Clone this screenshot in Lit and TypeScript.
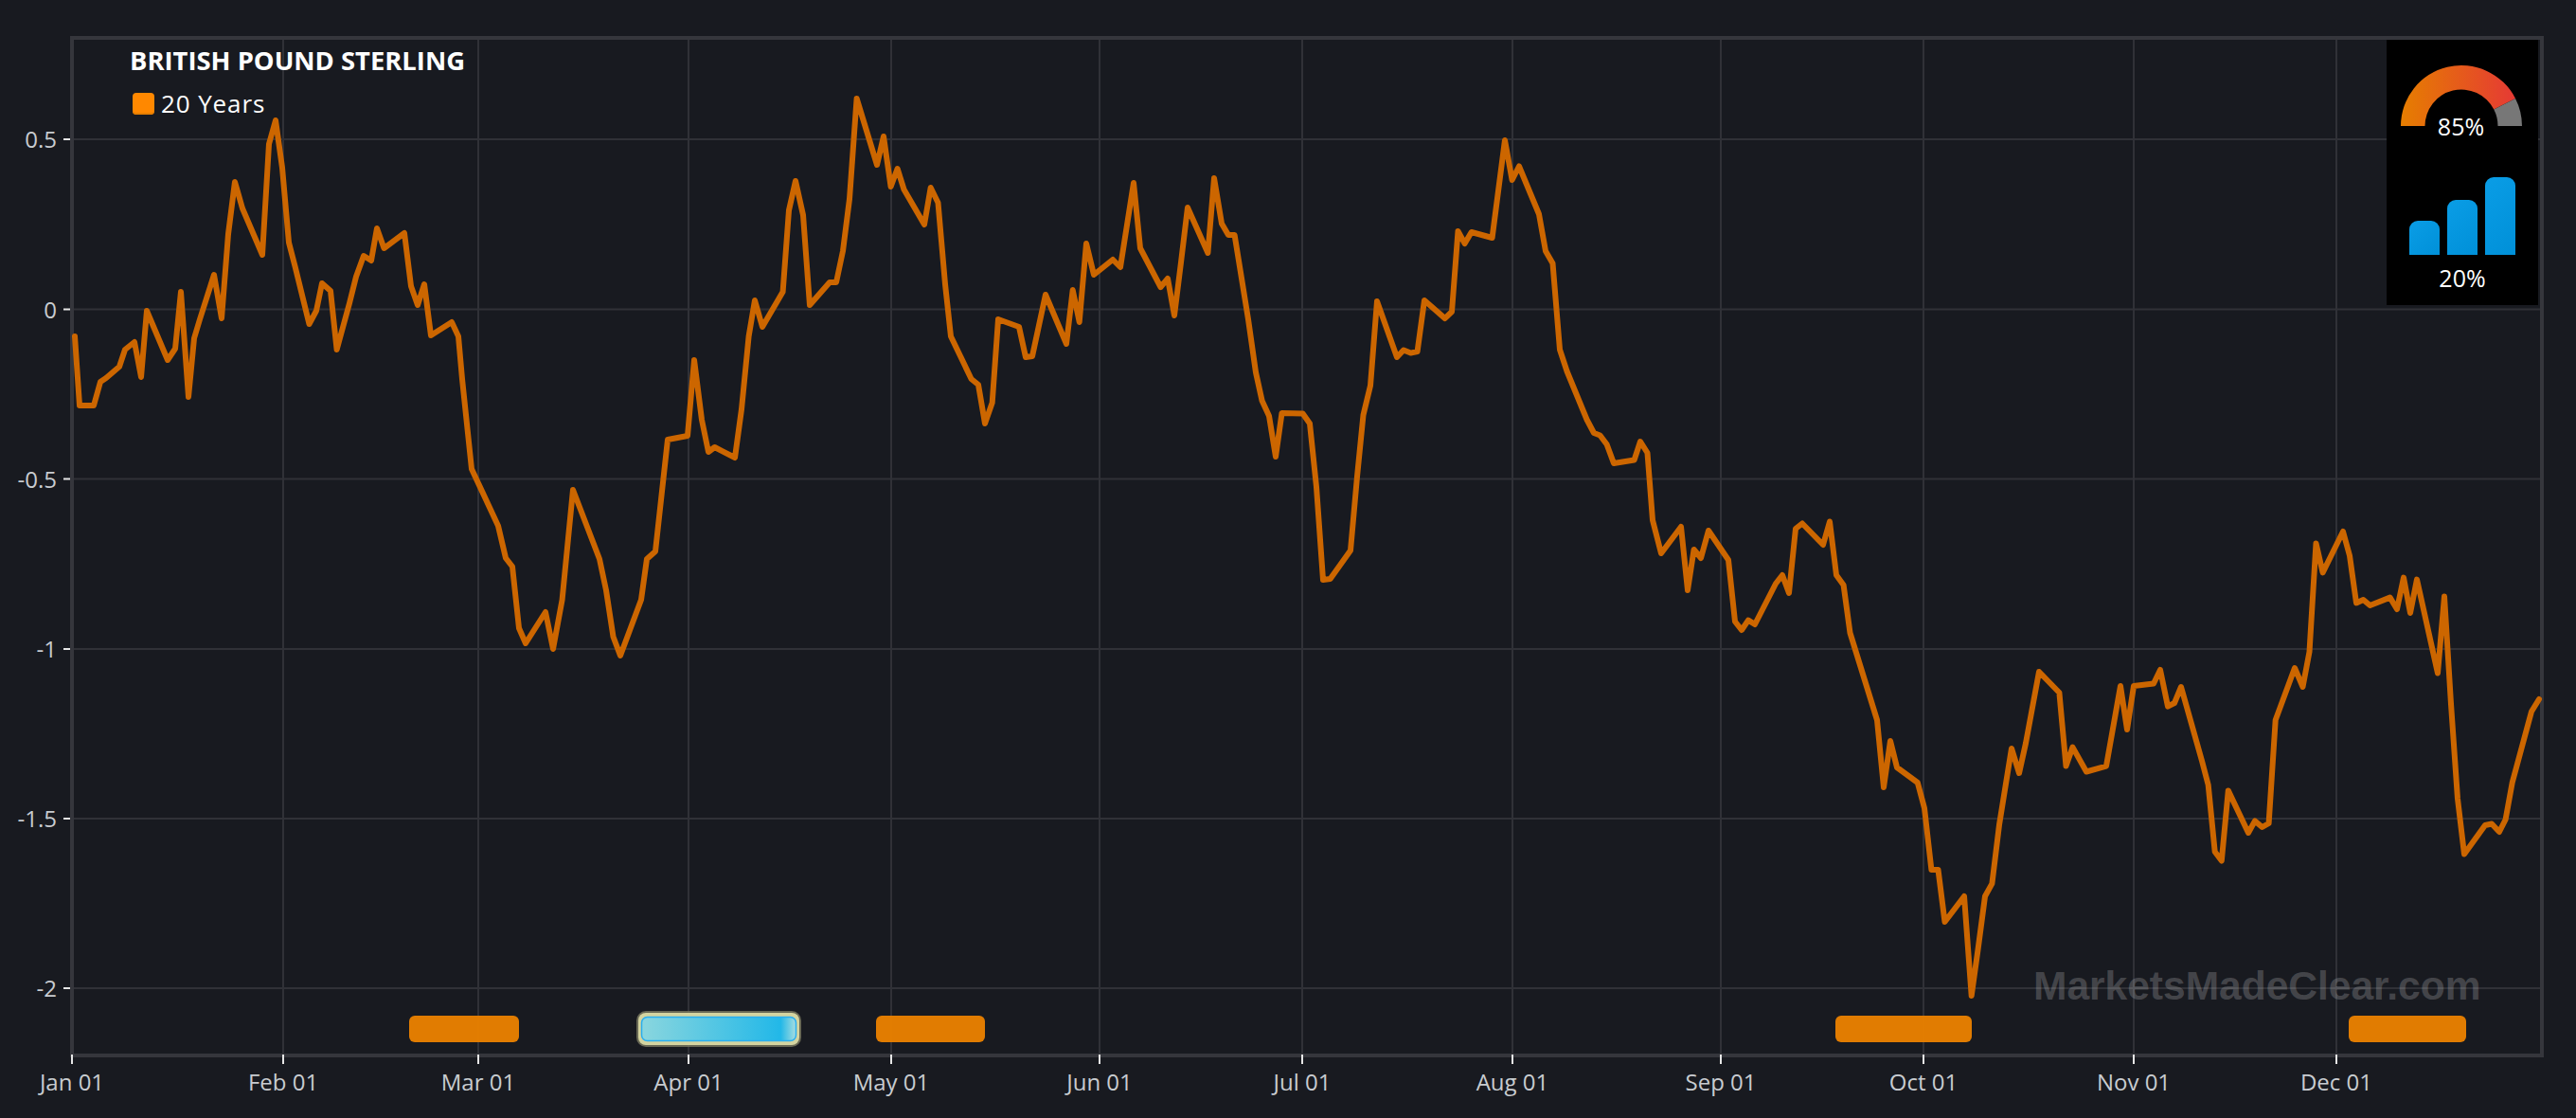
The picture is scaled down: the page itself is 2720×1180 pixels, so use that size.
import { LitElement, html, css, svg } from 'lit';
import { customElement } from 'lit/decorators.js';

const W = 2720;
const H = 1180;
const LEFT = 76;
const RIGHT = 2684;
const TOP = 40;
const BOTTOM = 1114;

const yTicks = [
  { label: '0.5', y: 147 },
  { label: '0', y: 326.5 },
  { label: '-0.5', y: 505.5 },
  { label: '-1', y: 685 },
  { label: '-1.5', y: 864 },
  { label: '-2', y: 1043 },
];

const xTicks = [
  { label: 'Jan 01', x: 76 },
  { label: 'Feb 01', x: 299 },
  { label: 'Mar 01', x: 505 },
  { label: 'Apr 01', x: 727 },
  { label: 'May 01', x: 941 },
  { label: 'Jun 01', x: 1161 },
  { label: 'Jul 01', x: 1375 },
  { label: 'Aug 01', x: 1597 },
  { label: 'Sep 01', x: 1817 },
  { label: 'Oct 01', x: 2031 },
  { label: 'Nov 01', x: 2253 },
  { label: 'Dec 01', x: 2467 },
];

// read off the reference, in page pixels
const series: number[][] = [
  [79, 355], [84, 428], [99, 428], [106, 403], [112, 399], [126, 387], [132, 369], [142, 361], [149, 398], [155, 328],
  [177, 380], [185, 368], [191, 308], [199, 419], [205, 357], [211, 337], [226, 290], [234, 336], [241, 247], [248, 192],
  [256, 220], [277, 269], [284, 152], [291, 127], [298, 177], [305, 256], [312, 283], [326.5, 342], [334, 328], [340, 299],
  [349, 307], [355.6, 369], [369, 320], [376, 292], [384, 270], [392, 275], [398, 241], [405.5, 262], [427, 246], [434, 302],
  [441, 322], [448, 300], [455, 354], [477, 340], [484, 355], [488, 400], [498, 495], [526, 555], [534, 589], [541, 598],
  [548, 663], [555, 679], [576, 646], [584, 685], [593.6, 633], [605, 517], [633, 590], [640, 623], [647.5, 672], [655, 692],
  [677, 633], [683, 590], [692, 582], [705, 464], [726, 460], [733, 380], [741, 443], [748, 477], [754.6, 472], [776, 483],
  [783, 432], [790.6, 355], [797, 317], [805, 345], [826.6, 308], [833, 222], [840, 191], [848, 227], [855, 322], [876, 298],
  [883, 298], [890, 265], [897, 210], [904.6, 104], [926, 174], [933, 144], [940.6, 197], [947.6, 178], [954.5, 200], [976, 237],
  [982.7, 198], [990.5, 214], [998, 300], [1004, 355], [1025.6, 400], [1033, 406], [1040, 447], [1047.7, 425], [1054, 337], [1076, 345],
  [1083, 377], [1090, 376], [1104, 311], [1126, 363], [1132.7, 306], [1139.7, 340], [1147, 257], [1155, 290], [1175, 274], [1183, 282],
  [1197, 193], [1204, 262], [1225.5, 303], [1233, 294], [1240, 333], [1247, 277], [1254, 219], [1275.4, 267], [1282, 188], [1290, 236],
  [1297, 248], [1303.6, 248], [1318, 337], [1326, 393], [1332.6, 423], [1340, 439], [1347, 482], [1353.5, 436], [1375.6, 436.5], [1383, 447],
  [1390, 514], [1397, 612], [1404.6, 611], [1426, 581], [1433, 503], [1439.5, 438], [1447, 407], [1454, 318], [1475, 377], [1482, 369.5],
  [1489.5, 372.6], [1496.6, 371], [1504, 317], [1525.6, 336], [1533, 329], [1539.5, 244], [1546.6, 257], [1553.7, 245], [1575.6, 251], [1589, 148],
  [1596.6, 190], [1604, 175.5], [1625, 226], [1632, 265], [1639.5, 278], [1647, 369], [1654.6, 392], [1675.6, 443], [1683, 457], [1689.5, 459.5],
  [1696.6, 469], [1704, 489], [1725.6, 485.5], [1732, 466], [1739.5, 478], [1745, 549], [1754, 584], [1775, 556], [1782, 623], [1788.6, 580],
  [1796, 589], [1804, 560], [1825, 591], [1832, 656], [1839, 665], [1846, 654.6], [1853, 659], [1875, 616], [1882, 607], [1889, 626],
  [1896, 558], [1903, 552.5], [1925, 575], [1932, 550.5], [1939, 607], [1946.6, 617.5], [1953.5, 668], [1982, 760], [1989, 831], [1996, 782],
  [2003, 810], [2024.8, 826], [2032, 853], [2039.4, 918], [2046.5, 918], [2053.5, 973], [2074, 946], [2081.7, 1051], [2088.7, 1001], [2096, 946],
  [2103.4, 932.6], [2111, 870.6], [2124, 790], [2132, 816], [2139, 784.5], [2153, 709], [2174.4, 731], [2181.5, 808.6], [2188.5, 788.6], [2203, 814.5],
  [2224, 808.6], [2239, 724], [2246, 770], [2253, 724], [2274, 721.5], [2281, 707], [2289, 745.6], [2296, 742], [2303, 725], [2325, 803],
  [2331.7, 828.6], [2338.7, 899], [2345.8, 908.5], [2352.8, 834.4], [2374, 879], [2381, 866.4], [2388.6, 873], [2395.6, 869], [2402.7, 760], [2423, 705],
  [2431.5, 725], [2438.5, 688], [2445.5, 573.4], [2452.6, 604.4], [2474, 561], [2481, 586.5], [2488, 636.4], [2495.4, 633], [2502.5, 639], [2523.6, 630.6],
  [2531, 643], [2538, 609.6], [2545, 647], [2552, 611.6], [2574, 710.5], [2581, 629.5], [2588, 743], [2595, 843], [2602, 901.6], [2624, 871],
  [2631, 869.5], [2639, 878], [2645.6, 865], [2652.7, 826], [2673, 751], [2681, 738],
];

const orangeBands = [
  [432, 548],
  [925, 1040],
  [1938, 2082],
  [2480, 2604],
];

// half ring with its centre at 0,0, from angle a to angle b (degrees from the left end)
function ring(a: number, b: number, r1: number, r2: number) {
  const p = (deg: number, r: number) => {
    const t = (deg * Math.PI) / 180;
    return `${(-r * Math.cos(t)).toFixed(2)} ${(-r * Math.sin(t)).toFixed(2)}`;
  };
  return `M${p(a, r1)} A${r1} ${r1} 0 0 1 ${p(b, r1)} L${p(b, r2)} A${r2} ${r2} 0 0 0 ${p(a, r2)} Z`;
}

@customElement('app-root')
export class AppRoot extends LitElement {
  static styles = css`
    :host {
      display: block;
      position: relative;
      width: 2720px;
      height: 1180px;
      overflow: hidden;
      background: #181a20;
      font-family: 'Open Sans', 'Noto Sans', sans-serif;
    }
    .chart {
      display: block;
    }
    .grid {
      stroke: #303137;
      stroke-width: 2;
    }
    .axis {
      stroke: #35363c;
      stroke-width: 4;
      fill: none;
    }
    .tick {
      stroke: #e6e6e6;
      stroke-width: 2;
    }
    .label {
      fill: #c8ccd0;
      font-size: 24px;
      font-family: 'Open Sans', sans-serif;
    }
    .series {
      fill: none;
      stroke: #cc6600;
      stroke-width: 6;
      stroke-linejoin: round;
      stroke-linecap: round;
    }
    .band {
      fill: #e88000;
    }
    .mark {
      fill: #ffffff;
      fill-opacity: 0.2;
      font-size: 42.5px;
      font-weight: 700;
      font-family: 'Liberation Sans', Arial, sans-serif;
    }
    .legend {
      position: absolute;
      left: 137px;
      top: 48px;
      display: flex;
      flex-direction: column;
      gap: 13px;
      color: #fff;
    }
    .title {
      font-size: 27.4px;
      line-height: 32px;
      font-weight: 700;
    }
    .entry {
      display: flex;
      align-items: center;
      gap: 7px;
      margin-left: 3px;
      font-size: 26px;
      line-height: 32px;
      letter-spacing: 0.9px;
      font-family: 'Open Sans', sans-serif;
    }
    .swatch {
      width: 23px;
      height: 23px;
      border-radius: 4px;
      background: #ff8800;
      box-shadow: inset 0 -2px 0 #e67e00;
    }
    .panel {
      position: absolute;
      left: 2520px;
      top: 42px;
      width: 160px;
      height: 280px;
      background: #000;
      color: #fff;
      display: flex;
      flex-direction: column;
      align-items: center;
      font-size: 25px;
      line-height: 30px;
    }
    .gauge {
      display: block;
      margin-top: 26px;
      margin-left: -2px;
    }
    .pct {
      text-align: center;
    }
    .gauge-pct {
      margin-top: -16px;
      margin-left: -3px;
    }
    .bars {
      display: flex;
      align-items: flex-end;
      gap: 8px;
      margin-top: 39px;
    }
    .bar {
      width: 32px;
      border-radius: 9px 9px 0 0;
      background: linear-gradient(135deg, #0a9de6, #0090d8);
    }
    .bars-pct {
      margin-top: 9px;
    }
  `;

  render() {
    const points = series.map((p) => p.join(',')).join(' ');
    return html`
      <svg class="chart" width=${W} height=${H} viewBox="0 0 ${W} ${H}">
        <defs>
          <linearGradient id="bluefill" x1="0" x2="1" y1="0" y2="0">
            <stop offset="0" stop-color="#8ad6de"></stop>
            <stop offset="0.9" stop-color="#22b8e8"></stop>
            <stop offset="1" stop-color="#a8dde0"></stop>
          </linearGradient>
        </defs>
        ${yTicks.map(
          (t) => svg`
            <line class="grid" x1=${LEFT} x2=${RIGHT} y1=${t.y} y2=${t.y}></line>
            <line class="tick" x1="67" x2="77" y1=${t.y} y2=${t.y}></line>
            <text class="label" x="60" y=${t.y + 9} text-anchor="end">${t.label}</text>
          `
        )}
        ${xTicks.map(
          (t) => svg`
            <line class="grid" x1=${t.x} x2=${t.x} y1=${TOP} y2=${BOTTOM}></line>
            <text class="label" x=${t.x} y="1151" text-anchor="middle">${t.label}</text>
          `
        )}
        <text class="mark" x="2147" y="1055">MarketsMadeClear.com</text>
        <path class="axis" d="M${LEFT} ${BOTTOM} V${TOP} H${RIGHT} V${BOTTOM} Z"></path>
        ${xTicks.map((t) => svg`<line class="tick" x1=${t.x} x2=${t.x} y1="1113" y2="1123"></line>`)}
        ${orangeBands.map(
          (b) => svg`<rect class="band" x=${b[0]} y="1072" width=${b[1] - b[0]} height="28" rx="6" opacity="0.97"></rect>`
        )}
        <rect x="672" y="1067" width="174" height="38" rx="10" fill="#77775f" opacity="0.85"></rect>
        <rect x="674" y="1069" width="170" height="34" rx="8" fill="#d4d4a0"></rect>
        <rect x="677.5" y="1073.5" width="163" height="25" rx="6" fill="url(#bluefill)" stroke="#29aef0" stroke-width="1.5"></rect>
        <polyline class="series" points=${points}></polyline>
      </svg>

      <div class="legend">
        <div class="title">BRITISH POUND STERLING</div>
        <div class="entry"><span class="swatch"></span>20 Years</div>
      </div>

      <div class="panel">
        <svg class="gauge" width="130" height="66" viewBox="-65 -65 130 66">
          <defs>
            <linearGradient id="heat" gradientUnits="userSpaceOnUse" x1="-64" x2="58" y1="0" y2="0">
              <stop offset="0" stop-color="#e67e00"></stop>
              <stop offset="1" stop-color="#e53935"></stop>
            </linearGradient>
          </defs>
          <path d=${ring(0, 153, 64, 38.5)} fill="url(#heat)"></path>
          <path d=${ring(153, 180, 64, 38.5)} fill="#777777"></path>
        </svg>
        <div class="pct gauge-pct">85%</div>
        <div class="bars">
          <div class="bar" style="height:36px"></div>
          <div class="bar" style="height:58px"></div>
          <div class="bar" style="height:82px"></div>
        </div>
        <div class="pct bars-pct">20%</div>
      </div>
    `;
  }
}
